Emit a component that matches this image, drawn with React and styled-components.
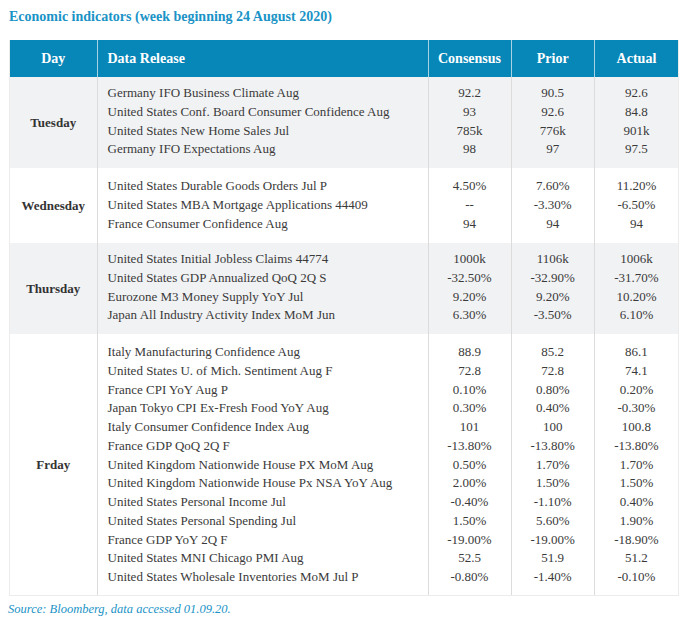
import React from "react";
import styled, { createGlobalStyle } from "styled-components";

const GlobalStyle = createGlobalStyle`
  body {
    margin: 0;
    background: #ffffff;
    font-family: "Liberation Serif", "DejaVu Serif", serif;
  }
`;

const Page = styled.div`
  width: 686px;
  padding: 8px 0 0 8px;
  box-sizing: border-box;
`;

const Title = styled.h2`
  margin: 0 0 14px 1px;
  font-size: 14px;
  font-weight: 700;
  color: #1a93c6;
  line-height: 18px;
`;

const Table = styled.div`
  width: 670px;
  margin-left: 1px;
  border: 1.5px solid #ececec;
  border-top: none;
  box-sizing: border-box;
`;

const cols = "86.5px 331px 83px 83.4px 1fr";

const HeaderRow = styled.div`
  display: grid;
  grid-template-columns: ${cols};
  height: 37px;
  background: #0786b8;
`;

const HeadCell = styled.div`
  display: flex;
  align-items: center;
  justify-content: ${(p) => (p.$left ? "flex-start" : "center")};
  padding-left: ${(p) => (p.$left ? "10px" : "0")};
  color: #ffffff;
  font-weight: 700;
  font-size: 14px;
  border-left: ${(p) => (p.$first ? "none" : "1.5px solid #a7d3e5")};
`;

const Group = styled.div`
  display: grid;
  grid-template-columns: ${cols};
  background: ${(p) => (p.$shade ? "#f1f2f4" : "#ffffff")};
`;

const DayCell = styled.div`
  display: flex;
  align-items: center;
  justify-content: center;
  font-weight: 700;
  font-size: 13px;
  color: #333333;
`;

const Col = styled.div`
  display: flex;
  flex-direction: column;
  padding-top: ${(p) => p.$pad[0]}px;
  padding-bottom: ${(p) => p.$pad[1]}px;
  padding-left: ${(p) => (p.$left ? "10px" : "0")};
  align-items: ${(p) => (p.$left ? "flex-start" : "center")};
  border-left: 1.5px solid #dcdcdc;
`;

const Line = styled.div`
  height: 18.75px;
  line-height: 18.75px;
  font-size: 13px;
  color: #3a3a3a;
  white-space: nowrap;
`;

const Source = styled.p`
  margin: 6px 0 0 0;
  font-style: italic;
  font-size: 12.5px;
  color: #1a93c6;
`;

const data = [
  {
    day: "Tuesday",
    shade: true,
    pad: [7, 9],
    rows: [
      ["Germany IFO Business Climate Aug", "92.2", "90.5", "92.6"],
      ["United States Conf. Board Consumer Confidence Aug", "93", "92.6", "84.8"],
      ["United States New Home Sales Jul", "785k", "776k", "901k"],
      ["Germany IFO Expectations Aug", "98", "97", "97.5"],
    ],
  },
  {
    day: "Wednesday",
    pad: [9, 9.75],
    rows: [
      ["United States Durable Goods Orders Jul P", "4.50%", "7.60%", "11.20%"],
      ["United States MBA Mortgage Applications 44409", "--", "-3.30%", "-6.50%"],
      ["France Consumer Confidence Aug", "94", "94", "94"],
    ],
  },
  {
    day: "Thursday",
    shade: true,
    pad: [7, 9],
    rows: [
      ["United States Initial Jobless Claims 44774", "1000k", "1106k", "1006k"],
      ["United States GDP Annualized QoQ 2Q S", "-32.50%", "-32.90%", "-31.70%"],
      ["Eurozone M3 Money Supply YoY Jul", "9.20%", "9.20%", "10.20%"],
      ["Japan All Industry Activity Index MoM Jun", "6.30%", "-3.50%", "6.10%"],
    ],
  },
  {
    day: "Frday",
    pad: [9, 8.25],
    rows: [
      ["Italy Manufacturing Confidence Aug", "88.9", "85.2", "86.1"],
      ["United States U. of Mich. Sentiment Aug F", "72.8", "72.8", "74.1"],
      ["France CPI YoY Aug P", "0.10%", "0.80%", "0.20%"],
      ["Japan Tokyo CPI Ex-Fresh Food YoY Aug", "0.30%", "0.40%", "-0.30%"],
      ["Italy Consumer Confidence Index Aug", "101", "100", "100.8"],
      ["France GDP QoQ 2Q F", "-13.80%", "-13.80%", "-13.80%"],
      ["United Kingdom Nationwide House PX MoM Aug", "0.50%", "1.70%", "1.70%"],
      ["United Kingdom Nationwide House Px NSA YoY Aug", "2.00%", "1.50%", "1.50%"],
      ["United States Personal Income Jul", "-0.40%", "-1.10%", "0.40%"],
      ["United States Personal Spending Jul", "1.50%", "5.60%", "1.90%"],
      ["France GDP YoY 2Q F", "-19.00%", "-19.00%", "-18.90%"],
      ["United States MNI Chicago PMI Aug", "52.5", "51.9", "51.2"],
      ["United States Wholesale Inventories MoM Jul P", "-0.80%", "-1.40%", "-0.10%"],
    ],
  },
];

const App = () => {
  return (
    <>
      <GlobalStyle />
      <Page>
        <Title>Economic indicators (week beginning 24 August 2020)</Title>
        <Table>
          <HeaderRow>
            <HeadCell $first>Day</HeadCell>
            <HeadCell $left>Data Release</HeadCell>
            <HeadCell>Consensus</HeadCell>
            <HeadCell>Prior</HeadCell>
            <HeadCell>Actual</HeadCell>
          </HeaderRow>
          {data.map((group) => (
            <Group key={group.day} $shade={group.shade}>
              <DayCell>{group.day}</DayCell>
              {[0, 1, 2, 3].map((c) => (
                <Col key={c} $left={c === 0} $pad={group.pad}>
                  {group.rows.map((row, i) => (
                    <Line key={i}>{row[c]}</Line>
                  ))}
                </Col>
              ))}
            </Group>
          ))}
        </Table>
        <Source>Source: Bloomberg, data accessed 01.09.20.</Source>
      </Page>
    </>
  );
};

export default App;
